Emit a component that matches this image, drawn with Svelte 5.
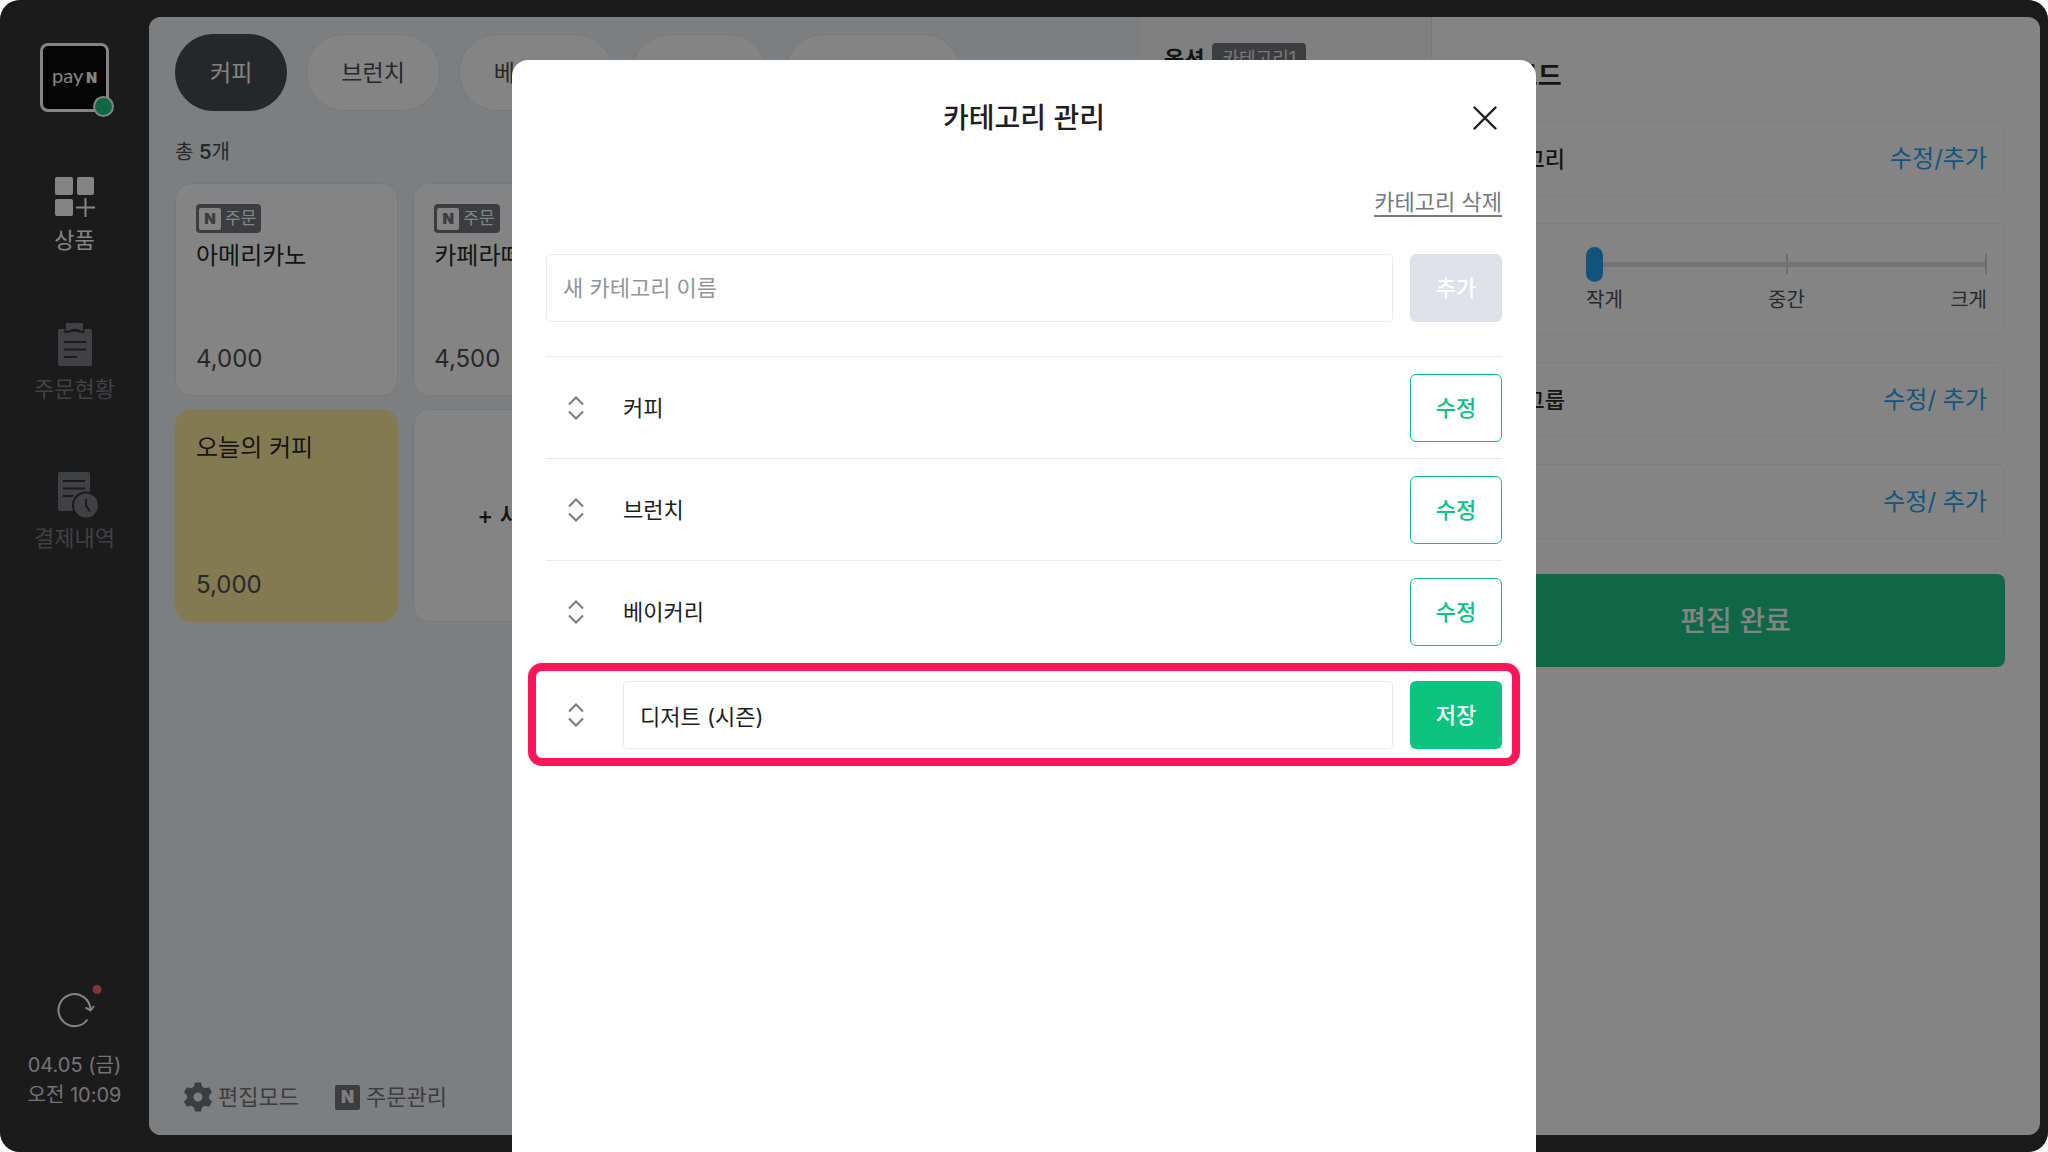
<script>
	let tab = '커피';
	let size = 0;
	let newName = '';
	let editing = '디저트 (시즌)';

	const tabs = ['커피', '브런치', '베이커리', '디저트', '테이크아웃'];

	const products = [
		{ name: '아메리카노', price: '4,000', order: true },
		{ name: '카페라떼', price: '4,500', order: true },
		{ name: '카푸치노', price: '4,500', order: true },
		{ name: '바닐라라떼', price: '5,000', order: true },
		{ name: '오늘의 커피', price: '5,000', yellow: true },
	];

	const categories = ['커피', '브런치', '베이커리'];
</script>

<svelte:head>
	<title>카테고리 관리</title>
</svelte:head>

{#snippet handle()}
	<svg class="handle" width="20" height="28" viewBox="0 0 20 28" aria-hidden="true">
		<path d="M3 10.5L10 3.5L17 10.5M3 17.5L10 24.5L17 17.5" fill="none" stroke="#77787c" stroke-width="2" />
	</svg>
{/snippet}

<div class="app">
	<aside>
		<div class="logo">
			<span class="pay">pay</span><span class="n">N</span>
			<i class="status"></i>
		</div>
		<nav>
			<a href="#products" class="active">
				<svg width="44" height="48" viewBox="0 0 44 48" aria-hidden="true">
					<g fill="#fff">
						<rect x="2" y="5" width="18" height="18" rx="2" />
						<rect x="24" y="5" width="17" height="18" rx="2" />
						<rect x="2" y="27" width="18" height="17" rx="2" />
						<path d="M31.5 26h2v8.5H42v2h-8.500V45h-2v-8.500H23v-2h8.500z" />
					</g>
				</svg>
				<span>상품</span>
			</a>
			<a href="#orders">
				<svg width="44" height="48" viewBox="0 0 44 48" aria-hidden="true">
					<path d="M6 8h5.500v4.500L22 10.500l9.500 2V8H37a2 2 0 0 1 2 2v33a2 2 0 0 1-2 2H7a2 2 0 0 1-2-2V10a2 2 0 0 1 1-2z" fill="currentColor" />
					<path d="M13 2h17v8l-8-2.500-9 2.500z" fill="currentColor" />
					<path d="M11 21h22M11 28.500h22M11 36h13" stroke="#2c2c2e" stroke-width="2" />
				</svg>
				<span>주문현황</span>
			</a>
			<a href="#payments">
				<svg width="44" height="48" viewBox="0 0 44 48" aria-hidden="true">
					<rect x="5" y="2" width="32" height="39" rx="2" fill="currentColor" />
					<path d="M10 11h22M10 18.500h22M10 26h10" stroke="#2c2c2e" stroke-width="2" />
					<circle cx="33" cy="35.500" r="13" fill="currentColor" stroke="#2c2c2e" stroke-width="2" />
					<path d="M33 29v6.500l4 6" fill="none" stroke="#2c2c2e" stroke-width="2" />
				</svg>
				<span>결제내역</span>
			</a>
		</nav>
		<div class="clock">
			<button class="refresh" aria-label="새로고침">
				<svg width="44" height="44" viewBox="0 0 44 44">
					<path d="M34.500 31.500A16 16 0 1 1 37.500 22" fill="none" stroke="#fff" stroke-width="2" />
					<path d="M32.500 19.500l5 3 3.500-4.500" fill="none" stroke="#fff" stroke-width="2" />
					<circle cx="44" cy="1.500" r="4.500" fill="#ff5f63" />
				</svg>
			</button>
			<span>04.05 (금)</span>
			<span>오전 10:09</span>
		</div>
	</aside>

	<main>
		<section class="products">
			<div class="tabs">
				{#each tabs as name}
					<button class:selected={tab === name} on:click={() => tab = name}>{name}</button>
				{/each}
			</div>
			<p class="total">총 <b>5</b>개</p>
			<div class="grid">
				{#each products as product}
					<button class="card" class:yellow={product.yellow}>
						{#if product.order}
							<span class="badge"><i>N</i>주문</span>
						{/if}
						<span class="name">{product.name}</span>
						<span class="price">{product.price}</span>
					</button>
				{/each}
				<button class="card new">+ 새 상품</button>
			</div>
			<div class="tools">
				<button>
					<svg width="28" height="30" viewBox="-14 -15 28 30" aria-hidden="true">
						<path fill-rule="evenodd" fill="currentColor" d="M-3 -14.500H3L4.200 -10.300L6.900 -8.700L11.100 -9.800L14 -4.700L11 -1.600V1.600L14 4.700L11.100 9.800L6.900 8.700L4.200 10.300L3 14.500H-3L-4.200 10.300L-6.900 8.700L-11.100 9.800L-14 4.700L-11 1.600V-1.600L-14 -4.700L-11.100 -9.800L-6.900 -8.700L-4.200 -10.300ZM0 -4.500A4.500 4.500 0 1 0 0 4.500A4.500 4.500 0 1 0 0 -4.500Z" />
					</svg>
					편집모드
				</button>
				<button><i>N</i>주문관리</button>
			</div>
		</section>

		<section class="options">
			<h2>옵션</h2>
			<span>카테고리1</span>
		</section>

		<section class="edit">
			<h1>편집모드</h1>
			<div class="setting">
				<span>카테고리</span>
				<a href="#category">수정/추가</a>
			</div>
			<div class="setting">
				<label for="size">크기</label>
				<div class="slider">
					<input id="size" type="range" min="0" max="2" bind:value={size}>
					<div class="marks">
						<span>작게</span>
						<span>중간</span>
						<span>크게</span>
					</div>
				</div>
			</div>
			<div class="setting">
				<span>옵션그룹</span>
				<a href="#option">수정/ 추가</a>
			</div>
			<div class="setting">
				<span>할인</span>
				<a href="#discount">수정/ 추가</a>
			</div>
			<button class="done">편집 완료</button>
		</section>
	</main>

	<div class="overlay">
		<div class="modal" role="dialog" aria-labelledby="modal-title">
			<header>
				<h2 id="modal-title">카테고리 관리</h2>
				<button class="close" aria-label="닫기">
					<svg width="26" height="26" viewBox="0 0 26 26">
						<path d="M2.500 2.500L23.500 23.500M23.500 2.500L2.500 23.500" stroke="#1e1e20" stroke-width="2.400" stroke-linecap="round" />
					</svg>
				</button>
			</header>
			<a class="remove" href="#remove">카테고리 삭제</a>
			<div class="add">
				<input type="text" aria-label="새 카테고리 이름" placeholder="새 카테고리 이름" bind:value={newName}>
				<button class="action" disabled={!newName}>추가</button>
			</div>
			<ul>
				{#each categories as category}
					<li>
						{@render handle()}
						<span>{category}</span>
						<button class="action outline">수정</button>
					</li>
				{/each}
				<li class="current">
					{@render handle()}
					<input type="text" aria-label="카테고리 이름" bind:value={editing}>
					<button class="action">저장</button>
				</li>
			</ul>
		</div>
	</div>
</div>

<style>
	:global(body) {
		background: #fff;
	}

	.app, .app * {
		box-sizing: border-box;
	}

	.app {
		background: #2c2c2e;
		border-radius: 20px;
		color: #1e1e20;
		display: flex;
		font-family: Inter, "Noto Sans CJK KR", sans-serif;
		font-size: 22px;
		height: 100vh;
		line-height: 32px;
		overflow: hidden;
		padding: 17px 8px 17px 0;
		position: relative;
	}

	button, input {
		background: none;
		border: 0;
		color: inherit;
		font: inherit;
		margin: 0;
		padding: 0;
	}

	h1, h2, p, ul {
		font-weight: 400;
		list-style: none;
		margin: 0;
		padding: 0;
	}

	a {
		color: inherit;
		text-decoration: none;
	}

	i {
		font-style: normal;
	}

	svg {
		display: block;
		overflow: visible;
	}

	/* sidebar */
	aside {
		align-items: center;
		display: flex;
		flex: 0 0 149px;
		flex-direction: column;
		padding: 26px 0 25px;
	}

	.logo {
		align-items: baseline;
		background: #000;
		border: 3px solid #fff;
		border-radius: 8px;
		color: #fff;
		display: flex;
		font-family: Lato, sans-serif;
		font-size: 20px;
		gap: 3px;
		height: 69px;
		justify-content: center;
		line-height: 58px;
		position: relative;
		width: 69px;
	}

	.logo .n {
		font-family: Inter, sans-serif;
		font-size: 14px;
		font-weight: 900;
	}

	.status {
		background: #12c482;
		border: 2px solid #fff;
		border-radius: 50%;
		bottom: -8px;
		height: 21px;
		position: absolute;
		right: -8px;
		width: 21px;
	}

	nav {
		display: flex;
		flex-direction: column;
		gap: 65px;
		margin-top: 60px;
	}

	nav a {
		align-items: center;
		color: #76787e;
		display: flex;
		flex-direction: column;
		gap: 4px;
	}

	nav a.active {
		color: #fff;
	}

	.clock {
		align-items: center;
		color: #dcdde0;
		display: flex;
		flex-direction: column;
		font-size: 20px;
		line-height: 30px;
		margin-top: auto;
	}

	.refresh {
		margin-bottom: 18px;
	}

	/* product list */
	main {
		background: #fff;
		border-radius: 12px;
		display: flex;
		flex: 1;
		overflow: hidden;
	}

	.products {
		background: #f0f2f6;
		display: flex;
		flex: 1;
		flex-direction: column;
		padding: 17px 27px 22px 26px;
	}

	.tabs {
		display: flex;
		gap: 19px;
	}

	.tabs button {
		background: #fff;
		border: 1px solid #e6e8ec;
		border-radius: 38px;
		color: #45474c;
		font-size: 23px;
		height: 77px;
		padding: 0 34px;
	}

	.tabs .selected {
		background: #43454a;
		border-color: #43454a;
		color: #fff;
	}

	.total {
		color: #45474c;
		font-size: 20px;
		margin: 25px 0 15px;
	}

	.total b {
		font-weight: 600;
	}

	.grid {
		display: grid;
		gap: 13px 15px;
		grid-auto-rows: 213px;
		grid-template-columns: repeat(4, 1fr);
	}

	.card {
		align-items: flex-start;
		background: #fff;
		border: 1px solid #e6e8ec;
		border-radius: 16px;
		display: flex;
		flex-direction: column;
		font-size: 24px;
		padding: 20px;
	}

	.card.yellow {
		background: #ffea9a;
		border-color: #ffea9a;
	}

	.card.new {
		align-items: center;
		font-weight: 500;
		justify-content: center;
	}

	.badge {
		align-items: center;
		background: #6e7076;
		border-radius: 4px;
		color: #fff;
		display: flex;
		font-size: 17px;
		gap: 4px;
		height: 29px;
		line-height: 29px;
		margin-bottom: 5px;
		padding: 0 5px 0 3px;
	}

	.badge i {
		background: #fff;
		border-radius: 2px;
		color: #6e7076;
		font-size: 15px;
		font-weight: 900;
		height: 22px;
		line-height: 22px;
		text-align: center;
		width: 22px;
	}

	.name {
		line-height: 36px;
	}

	.price {
		color: #45474c;
		margin-top: auto;
	}

	.tools {
		color: #6e7076;
		display: flex;
		gap: 36px;
		margin-top: auto;
		padding-left: 9px;
	}

	.tools button {
		align-items: center;
		display: flex;
		gap: 6px;
	}

	.tools i {
		background: #6e7076;
		border-radius: 2px;
		color: #f0f2f6;
		font-size: 17px;
		font-weight: 900;
		height: 25px;
		line-height: 25px;
		width: 25px;
	}

	/* option column */
	.options {
		align-items: flex-start;
		background: #f6f6f9;
		border-right: 1px solid #e6e8ec;
		display: flex;
		flex: 0 0 292px;
		gap: 8px;
		padding: 26px 24px;
	}

	.options h2 {
		font-size: 22px;
		font-weight: 700;
	}

	.options span {
		background: #6e7076;
		border-radius: 4px;
		color: #e6e8ec;
		font-size: 18px;
		padding: 0 10px;
	}

	/* edit panel */
	.edit {
		display: flex;
		flex: 0 0 608px;
		flex-direction: column;
		gap: 27px;
		padding: 43px 35px 43px 34px;
	}

	.edit h1 {
		font-size: 26px;
		font-weight: 700;
		margin-bottom: 2px;
	}

	.setting {
		align-items: center;
		border: 1px solid #f0f0f3;
		border-radius: 8px;
		display: flex;
		font-weight: 500;
		justify-content: space-between;
		min-height: 75px;
		padding: 17px;
	}

	.setting a {
		color: #1aa0f5;
		font-size: 24px;
		font-weight: 400;
	}

	.slider {
		background:
			linear-gradient(#d4d4d8, #d4d4d8) 50% 13px / 2px 20px no-repeat,
			linear-gradient(#d4d4d8, #d4d4d8) 100% 13px / 2px 20px no-repeat,
			linear-gradient(#dcdce0, #dcdce0) 0 21px / 100% 5px no-repeat;
		color: #45474c;
		font-size: 20px;
		font-weight: 400;
		line-height: 24px;
		padding-bottom: 5px;
		width: 401px;
	}

	.slider input {
		appearance: none;
		display: block;
		height: 47px;
		width: 100%;
	}

	.slider input::-webkit-slider-thumb {
		appearance: none;
		background: #1a9cf0;
		border-radius: 9px;
		height: 35px;
		width: 17px;
	}

	.marks {
		display: flex;
		justify-content: space-between;
	}

	.done {
		background: #12c482;
		border-radius: 8px;
		color: #fff;
		font-size: 28px;
		font-weight: 500;
		height: 93px;
		margin-top: 8px;
	}

	/* category dialog */
	.overlay {
		background: rgba(10, 10, 10, 0.5);
		display: flex;
		inset: 0;
		justify-content: center;
		padding-top: 60px;
		position: absolute;
	}

	.modal {
		background: #fff;
		border-radius: 16px 16px 0 0;
		display: flex;
		flex-direction: column;
		padding: 0 34px;
		width: 50%;
	}

	header {
		align-items: center;
		display: grid;
		grid-template-columns: 60px 1fr 60px;
		height: 116px;
	}

	header h2 {
		font-size: 28px;
		font-weight: 500;
		grid-column: 2;
		text-align: center;
	}

	.close {
		justify-self: end;
		padding: 4px;
	}

	.remove {
		align-self: flex-end;
		border-bottom: 2px solid #77787c;
		color: #77787c;
		line-height: 26px;
		margin: 13px 0 37px;
	}

	.add {
		display: flex;
		gap: 17px;
		margin-bottom: 34px;
	}

	.modal input {
		border: 1px solid #ececef;
		border-radius: 4px;
		flex: 1;
		height: 68px;
		min-width: 0;
		padding: 0 16px;
	}

	.modal input::placeholder {
		color: #929499;
		opacity: 1;
	}

	.action {
		background: #0bc27f;
		border-radius: 6px;
		color: #fff;
		flex: 0 0 92px;
		font-weight: 500;
		height: 68px;
	}

	.action:disabled {
		background: #dee1e8;
	}

	.action.outline {
		background: #fff;
		border: 1px solid #0bc27f;
		color: #0bc27f;
	}

	li {
		align-items: center;
		border-top: 1px solid #e9e9ec;
		display: flex;
		gap: 17px;
		padding: 17px 0 16px;
		position: relative;
	}

	.handle {
		flex: 0 0 60px;
	}

	li span {
		flex: 1;
	}

	.current {
		margin-top: 1px;
	}

	.current::after {
		border: 8px solid #ff1659;
		border-radius: 14px;
		content: "";
		inset: -1px -18px;
		pointer-events: none;
		position: absolute;
	}
</style>
